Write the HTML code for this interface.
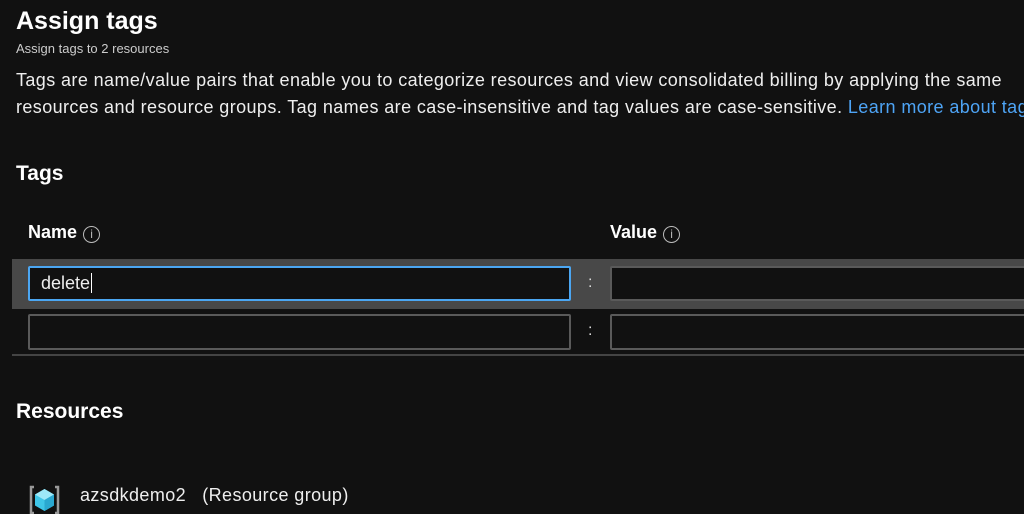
<!DOCTYPE html>
<html><head><style>
body{margin:0;width:1024px;height:512px;background:#111111;color:#fff;font-family:"Liberation Sans",sans-serif;position:relative;overflow:hidden}
.a{position:absolute;white-space:nowrap}
.inp{position:absolute;height:32px;border:2px solid #5a5a5a;border-radius:2px;background:#111;box-sizing:border-box}
.info{display:inline-block;width:17px;height:17px;border:1px solid #bbb;border-radius:50%;box-sizing:border-box;font-size:12px;text-align:center;line-height:15px;color:#bbb;font-weight:normal;vertical-align:0px;margin-left:6px}
</style></head><body>
<div class="a" style="left:16px;top:7px;font-size:25px;font-weight:bold">Assign tags</div>
<div class="a" style="left:16px;top:41px;font-size:13px;color:#ccc">Assign tags to 2 resources</div>
<div class="a" style="left:16px;top:67px;font-size:18px;letter-spacing:0.4px;line-height:27px;color:#eee">Tags are name/value pairs that enable you to categorize resources and view consolidated billing by applying the same<br>resources and resource groups. Tag names are case-insensitive and tag values are case-sensitive. <span style="color:#4ea4f5">Learn more about tags</span></div>
<div class="a" style="left:16px;top:162px;font-size:21px;font-weight:bold">Tags</div>
<div class="a" style="left:28px;top:222px;font-size:18px;font-weight:bold">Name<span class="info">i</span></div>
<div class="a" style="left:610px;top:222px;font-size:18px;font-weight:bold">Value<span class="info">i</span></div>
<div class="a" style="left:12px;top:259px;width:1012px;height:50px;background:#484848"></div>
<div class="inp" style="left:28px;top:266px;width:543px;height:35px;border-color:#4ba6f2;background:#111"></div>
<div class="a" style="left:41px;top:273px;font-size:18px;color:#eee">delete<span style="border-left:1px solid #fff;margin-left:1px"></span></div>
<div class="a" style="left:588px;top:274px;font-size:16px;color:#ddd">:</div>
<div class="inp" style="left:610px;top:266px;width:420px;height:35px"></div>
<div class="inp" style="left:28px;top:314px;width:543px;height:36px"></div>
<div class="a" style="left:588px;top:322px;font-size:16px;color:#ddd">:</div>
<div class="inp" style="left:610px;top:314px;width:420px;height:36px"></div>
<div class="a" style="left:12px;top:354px;width:1012px;height:2px;background:#444"></div>
<div class="a" style="left:16px;top:400px;font-size:21px;font-weight:bold">Resources</div>
<svg class="a" style="left:28px;top:484px" width="34" height="30" viewBox="0 0 34 30">
<path d="M6 3H3V29H6" fill="none" stroke="#999" stroke-width="2.5"/><path d="M27 3H30V29H27" fill="none" stroke="#999" stroke-width="2.5"/>
<path d="M16.5 5L26 10.5V21.5L16.5 27L7 21.5V10.5Z" fill="#3fc6e8"/><path d="M16.5 5L26 10.5L16.5 16L7 10.5Z" fill="#9de8f8"/><path d="M16.5 16L26 10.5V21.5L16.5 27Z" fill="#2aa8d0"/>
</svg>
<div class="a" style="left:80px;top:485px;font-size:18px;letter-spacing:0.4px;color:#eee">azsdkdemo2&nbsp;&nbsp; (Resource group)</div>
</body></html>
